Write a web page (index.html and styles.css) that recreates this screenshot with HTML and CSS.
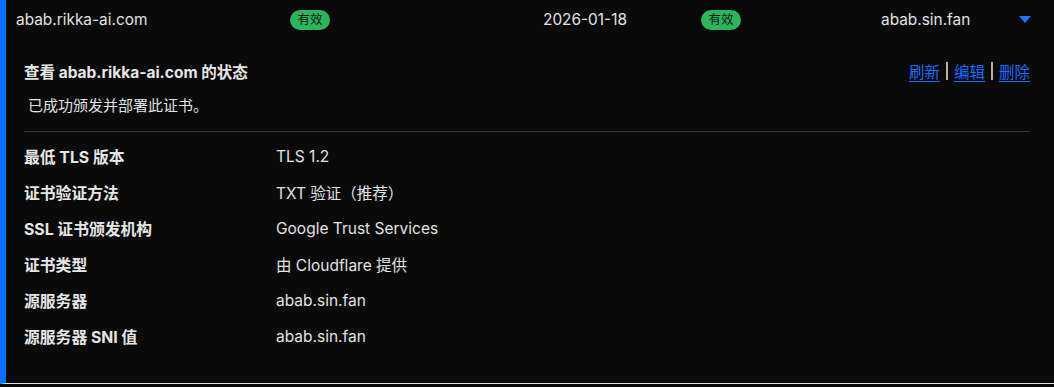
FILE: index.html
```html
<!DOCTYPE html>
<html lang="zh">
<head>
<meta charset="utf-8">
<link rel="stylesheet" href="styles.css">
</head>
<body>
<div class="cert">
  <div class="summary">
    <span class="c-host">abab.rikka-ai.com</span>
    <span class="c-status"><span class="badge">有效</span></span>
    <span class="c-date">2026-01-18</span>
    <span class="c-status2"><span class="badge">有效</span></span>
    <span class="c-origin">abab.sin.fan</span>
    <span class="c-toggle"><span class="caret"></span></span>
  </div>
  <div class="detail">
    <div class="detail-head">
      <h3 class="title">查看 abab.rikka-ai.com 的状态</h3>
      <div class="actions">
        <a href="#" class="link">刷新</a><span class="sep"></span><a href="#" class="link">编辑</a><span class="sep"></span><a href="#" class="link">删除</a>
      </div>
    </div>
    <p class="message">已成功颁发并部署此证书。</p>
    <div class="divider"></div>
    <dl class="props">
      <div class="prop"><dt>最低 TLS 版本</dt><dd>TLS 1.2</dd></div>
      <div class="prop"><dt>证书验证方法</dt><dd>TXT 验证（推荐）</dd></div>
      <div class="prop"><dt>SSL 证书颁发机构</dt><dd>Google Trust Services</dd></div>
      <div class="prop"><dt>证书类型</dt><dd>由 Cloudflare 提供</dd></div>
      <div class="prop"><dt>源服务器</dt><dd>abab.sin.fan</dd></div>
      <div class="prop"><dt>源服务器 SNI 值</dt><dd>abab.sin.fan</dd></div>
    </dl>
  </div>
</div>
<div class="next-row"></div>
</body>
</html>
```

FILE: styles.css
```css
html, body {
  margin: 0;
  padding: 0;
  background: #0a0a0a;
}
body {
  font-family: Inter, "Noto Sans CJK SC", sans-serif;
  color: #e2e2e2;
  width: 1054px;
  height: 387px;
  overflow: hidden;
}
.cert {
  border-left: 6px solid #0b6efd;
  border-bottom: 1px solid #dedede;
  height: 384px;
  box-sizing: border-box;
  background: #0a0a0a;
}
.summary {
  display: grid;
  grid-template-columns: 274px 253px 158px 180px 138px 1fr;
  align-items: center;
  height: 38px;
  padding-left: 10px;
  font-size: 15.4px;
}
.badge {
  display: inline-block;
  width: 40px;
  height: 20px;
  line-height: 20px;
  border-radius: 10px;
  background: #2db55d;
  color: #0f1a12;
  font-size: 12.5px;
  text-align: center;
}
.c-toggle {
  display: flex;
  align-items: center;
}
.caret {
  width: 0;
  height: 0;
  border-left: 6px solid transparent;
  border-right: 6px solid transparent;
  border-top: 7px solid #1f78ff;
}
.detail {
  padding: 23px 24px 0 18px;
}
.detail-head {
  display: flex;
  justify-content: space-between;
  align-items: center;
  height: 20px;
}
.title {
  margin: 0;
  font-size: 15.5px;
  font-weight: 700;
  color: #e6e6e6;
}
.actions {
  display: flex;
  align-items: center;
  font-size: 15.5px;
}
.link {
  color: #1f6bff;
  text-decoration: underline;
  text-underline-offset: 3px;
}
.sep {
  width: 2px;
  height: 18px;
  background: #b9b1a0;
  margin: 0 6px;
}
.message {
  margin: 15px 0 0 4px;
  font-size: 15px;
  line-height: 20px;
  color: #e2e2e2;
}
.divider {
  margin-top: 15px;
  height: 1px;
  background: #333333;
}
.props {
  margin: 0;
  padding-top: 6px;
}
.prop {
  display: flex;
  align-items: center;
  height: 36px;
}
.prop dt {
  width: 252px;
  font-weight: 700;
  font-size: 15.8px;
  color: #e6e6e6;
}
.prop dd {
  margin: 0;
  font-size: 15.5px;
  color: #e2e2e2;
}
.next-row {
  height: 2px;
}
```
